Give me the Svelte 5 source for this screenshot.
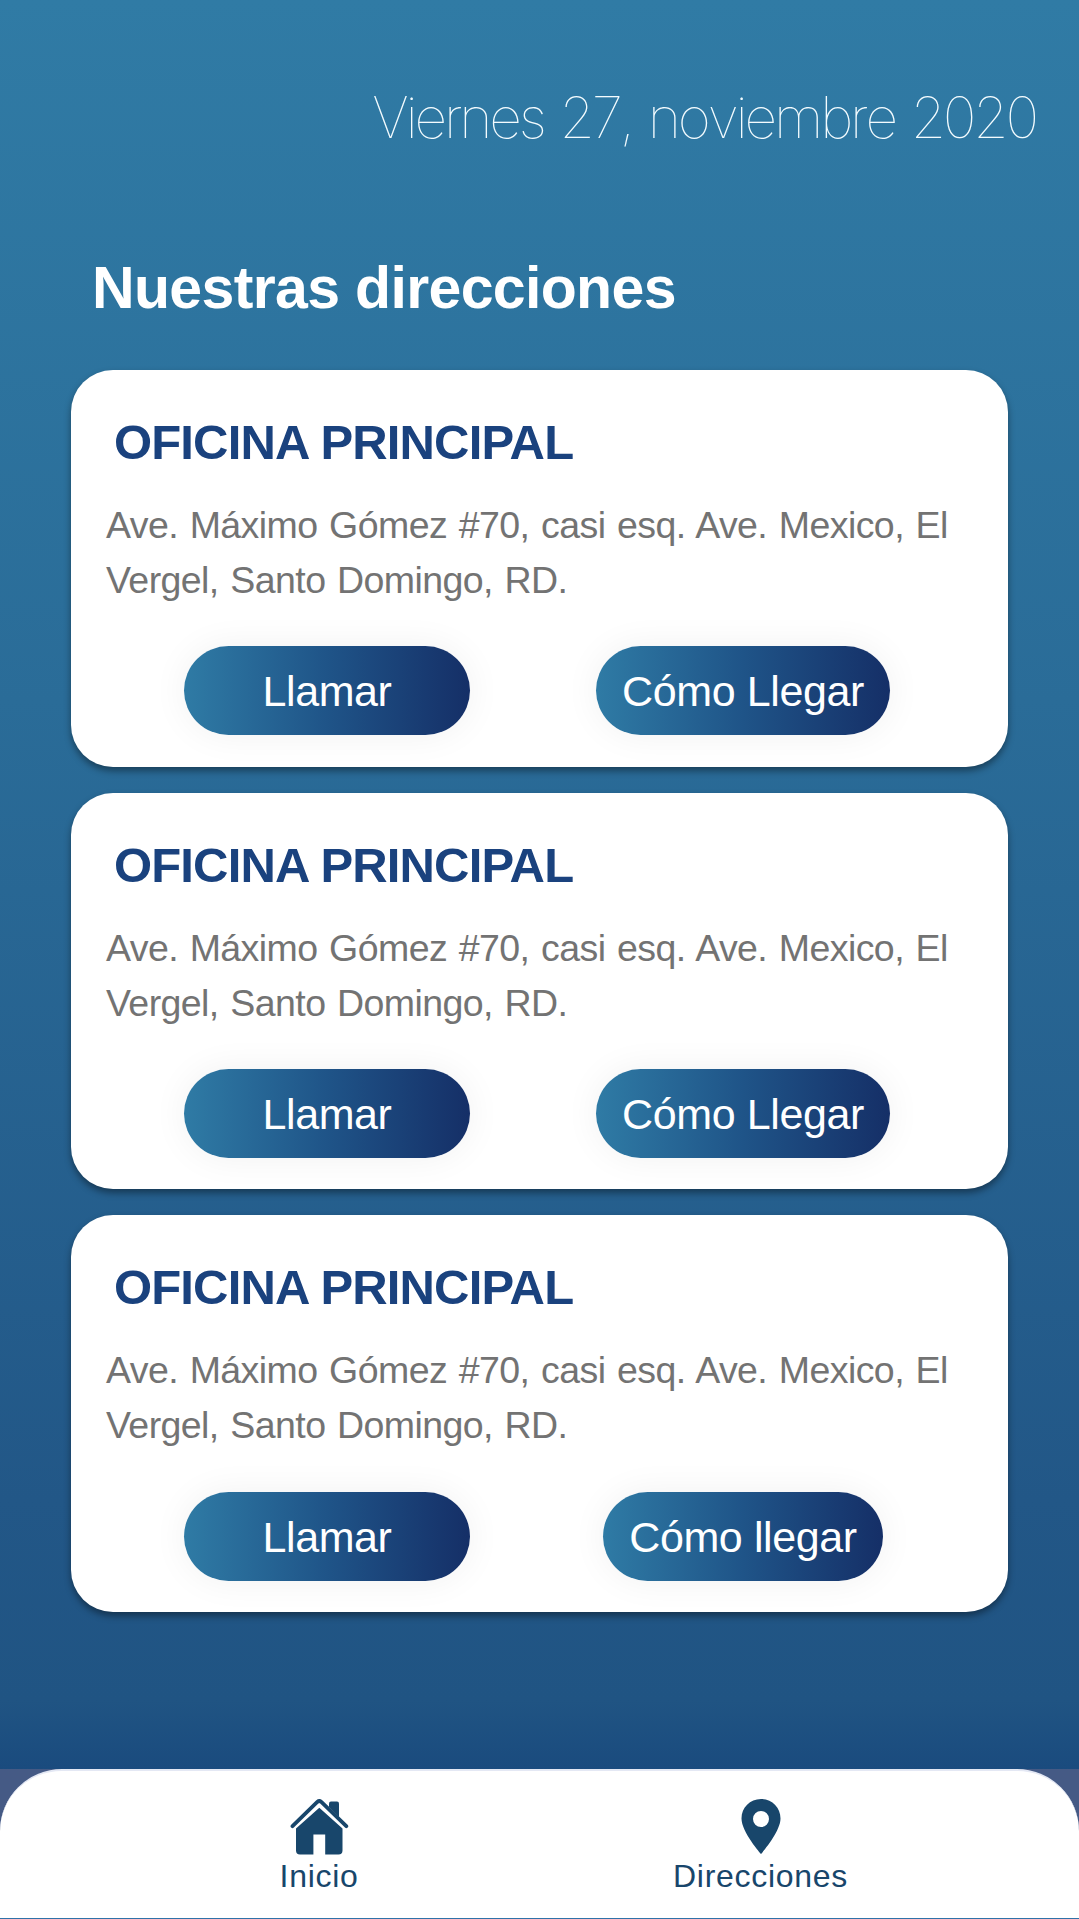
<script lang="ts">
  type Office = {
    name: string;
    address: string;
    directionsLabel: string;
  };

  const date = "Viernes 27, noviembre 2020";
  const address =
    "Ave. Máximo Gómez #70, casi esq. Ave. Mexico, El Vergel, Santo Domingo, RD.";

  const offices: Office[] = [
    { name: "OFICINA PRINCIPAL", address, directionsLabel: "Cómo Llegar" },
    { name: "OFICINA PRINCIPAL", address, directionsLabel: "Cómo Llegar" },
    { name: "OFICINA PRINCIPAL", address, directionsLabel: "Cómo llegar" },
  ];
</script>

<div class="screen">
  <main>
    <p class="date">{date}</p>
    <h1>Nuestras direcciones</h1>
    <div class="offices">
      {#each offices as office}
        <section class="card">
          <h2>{office.name}</h2>
          <p class="address">{office.address}</p>
          <div class="actions">
            <button class="call">Llamar</button>
            <button>{office.directionsLabel}</button>
          </div>
        </section>
      {/each}
    </div>
  </main>

  <div class="nav-wrap">
    <nav>
      <a class="home" href="#inicio">
        <svg width="60" height="56" viewBox="0 0 60 56">
          <path
            d="M30.3 8.8 53.5 29.5V51.5q0 4-4 4H36.2V35.5H24.4V55.5H11q-4 0-4-4V29.5z"
            fill="#18466b"
          />
          <path
            d="M40 8V4.5q0-2 2-2h6q2 0 2 2V18z"
            fill="#18466b"
          />
          <path
            d="M3.5 27.2 28.3 3q2-1.8 4 0L57.3 27.2"
            fill="none"
            stroke="#18466b"
            stroke-width="3.8"
            stroke-linecap="round"
          />
        </svg>
        <span>Inicio</span>
      </a>
      <a class="places" href="#direcciones">
        <svg width="40" height="56" viewBox="0 0 40 56">
          <path
            fill-rule="evenodd"
            d="M20 0C9 0 .5 8.500 .5 19.500C.5 33 20 55 20 55S39.500 33 39.500 19.500C39.500 8.500 31 0 20 0zM20 12a8 8 0 1 1 0 16a8 8 0 0 1 0-16z"
            fill="#18466b"
          />
        </svg>
        <span>Direcciones</span>
      </a>
    </nav>
  </div>
</div>

<style>
  :global(body) {
    margin: 0;
  }
  .screen {
    display: flex;
    flex-direction: column;
    box-sizing: border-box;
    width: 1079px;
    height: 1919px;
    overflow: hidden;
    font-family: "Liberation Sans", Arial, sans-serif;
    background: linear-gradient(
      #307ba5,
      #2a6c98 700px,
      #225787 1500px,
      #205483 1700px,
      #1a4b7e 1769px
    );
  }
  main {
    flex: 1;
    padding: 81px 71px 0;
  }
  .date {
    margin: 0 -28px 0 0;
    font-family: Inter, sans-serif;
    font-size: 57px;
    font-weight: 100;
    font-kerning: none;
    line-height: 74px;
    letter-spacing: -3.2px;
    word-spacing: 3px;
    text-align: right;
    white-space: nowrap;
    color: #f4fcff;
  }
  h1 {
    margin: 98px 0 0 21px;
    font-size: 59px;
    line-height: 70px;
    letter-spacing: -0.65px;
    color: #fff;
  }
  .offices {
    display: flex;
    flex-direction: column;
    gap: 26px;
    margin-top: 47px;
  }
  .card {
    box-sizing: border-box;
    height: 396.6px;
    padding: 43px 34px 0 35px;
    border-radius: 42px;
    background: #fff;
    box-shadow: 0 4px 7px rgba(0, 0, 0, 0.4);
  }
  h2 {
    margin: 0 0 0 8px;
    font-size: 49px;
    line-height: 58px;
    letter-spacing: -0.85px;
    color: #1a427e;
  }
  .address {
    margin: 27px 0 0;
    font-size: 37.5px;
    line-height: 55.2px;
    letter-spacing: -0.58px;
    word-spacing: 1.8px;
    color: #737373;
  }
  .actions {
    display: grid;
    grid-template-columns: 416px 416px;
    justify-items: center;
    margin: 38px 0 0 13px;
  }
  button {
    height: 89px;
    padding: 2px 26px 0;
    border: 0;
    border-radius: 45px;
    font-family: inherit;
    font-size: 43px;
    letter-spacing: -0.4px;
    white-space: nowrap;
    color: #fff;
    background: linear-gradient(90deg, #2f7ba5, #1f5488 50%, #152f67);
    box-shadow: 0 0 36px rgba(0, 0, 0, 0.06);
  }
  .call {
    width: 286px;
  }
  .nav-wrap {
    height: 149px;
    border-bottom: 1px solid #2f72a8;
    background: #455a85;
  }
  nav {
    display: flex;
    box-sizing: border-box;
    height: 100%;
    padding-top: 28px;
    border-top: 2px solid #e4e8f4;
    border-radius: 62px 62px 0 0;
    background: #fff;
  }
  a {
    display: flex;
    flex-direction: column;
    align-items: center;
    width: 200px;
    font-size: 32px;
    line-height: 36px;
    letter-spacing: 0.7px;
    text-decoration: none;
    color: #18466b;
  }
  a span {
    margin-top: 3px;
  }
  .home {
    margin-left: 219px;
  }
  .places {
    margin-left: 241.5px;
  }
</style>
